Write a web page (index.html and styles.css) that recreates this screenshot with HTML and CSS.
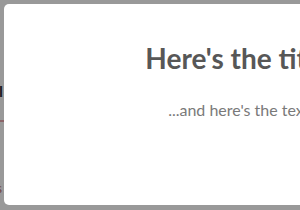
FILE: index.html
```html
<!DOCTYPE html>
<html lang="en">
<head>
    <meta charset="UTF-8">
    <meta name="viewport" content="width=device-width, initial-scale=1.0">
    <title>SweetAlert demo</title>
    <link rel="stylesheet" href="styles.css">
</head>
<body>
    <div class="page">
        <div class="demo-line">l</div>
        <div class="demo-rule"></div>
        <div class="demo-note">s</div>
    </div>

    <div class="overlay"></div>

    <div class="alert">
        <h2 class="alert-title">Here's the title!</h2>
        <p class="alert-text">...and here's the text!</p>
    </div>
</body>
</html>
```

FILE: styles.css
```css
body {
    margin: 0;
    padding: 0;
    background-color: #fff;
    font-family: 'Lato', 'Open Sans', sans-serif;
    overflow: hidden;
}

/* page under the overlay */
.page {
    height: 210px;
    padding-top: 83px;
    box-sizing: border-box;
}

.demo-line {
    font-size: 16px;
    line-height: 16px;
    color: #333;
    font-weight: bold;
    margin-left: -1px;
}

.demo-rule {
    height: 2px;
    width: 40px;
    background-color: #e9a8b0;
    margin-top: 21px;
}

.demo-note {
    font-size: 14px;
    line-height: 16px;
    color: #c07878;
    margin-top: 58px;
    margin-left: -4px;
}

.overlay {
    position: fixed;
    top: 0;
    left: 0;
    right: 0;
    bottom: 0;
    background-color: rgba(0, 0, 0, 0.4);
}

.alert {
    position: fixed;
    top: 4px;
    left: 4px;
    width: 474px;
    height: 201px;
    box-sizing: border-box;
    padding: 17px;
    background-color: #fff;
    border-radius: 5px;
    text-align: center;
}

.alert-title {
    color: #575757;
    font-size: 28px;
    font-weight: 700;
    line-height: 40px;
    margin: 17px 0 0;
}

.alert-text {
    color: #797979;
    font-size: 16px;
    line-height: 22px;
    margin: 21px 0 0;
}
```
